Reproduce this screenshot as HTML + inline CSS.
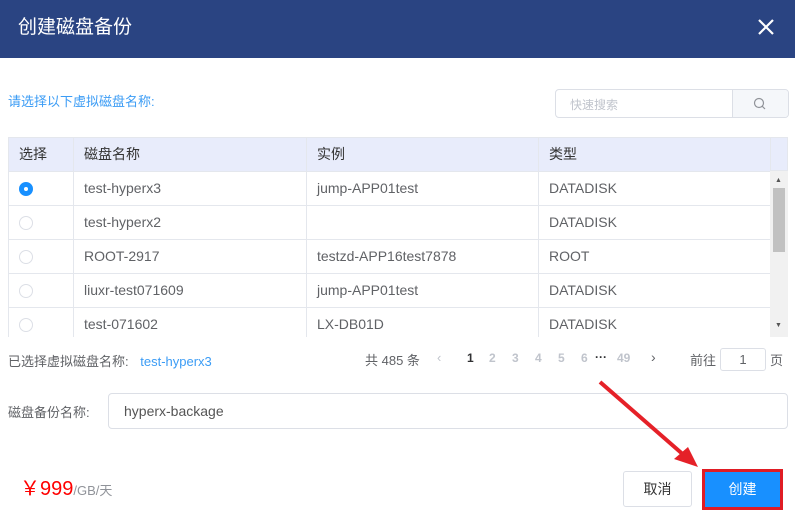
<!DOCTYPE html><html><head><meta charset="utf-8"><style>
*{margin:0;padding:0;box-sizing:border-box}
body{width:795px;height:526px;background:#fff;font-family:"Liberation Sans","Noto Sans CJK SC",sans-serif;font-size:14px;color:#606266;position:relative;overflow:hidden}
.hd{position:absolute;left:0;top:0;width:795px;height:58px;background:#2a4482;color:#fff;font-size:19px;line-height:56px;padding-left:18px}
.x{position:absolute;right:20px;top:18px;width:18px;height:18px}
.ab{position:absolute}
table{border-collapse:collapse;position:absolute;left:8px;top:137px;width:762px;table-layout:fixed}
td,th{border:1px solid #e4e7ed;height:34px;padding-left:10px;text-align:left;font-weight:normal;font-size:14px;white-space:nowrap;overflow:hidden;padding-bottom:2px}
th{background:#e8ecfb;color:#333}
.rb{width:14px;height:14px;border:1px solid #dcdfe6;border-radius:50%;display:inline-block;vertical-align:middle}
.on{background:#1890ff;border-color:#1890ff;position:relative}
.on:after{content:"";position:absolute;left:4px;top:4px;width:4px;height:4px;background:#fff;border-radius:50%}
</style></head><body>
<div class="hd">创建磁盘备份</div>
<svg class="x" viewBox="0 0 18 18"><path d="M2 2L16 16M16 2L2 16" stroke="#fff" stroke-width="2.2"/></svg>
<div class="ab" style="left:8px;top:91px;color:#3b9cf5;font-size:13px">请选择以下虚拟磁盘名称:</div>
<div class="ab" style="left:555px;top:89px;width:234px;height:29px;border:1px solid #dcdfe6;border-radius:4px;overflow:hidden">
<div class="ab" style="left:14px;top:6px;font-size:12px;color:#c0c4cc">快速搜索</div>
<div class="ab" style="left:176px;top:0;width:58px;height:27px;background:#f5f7fa;border-left:1px solid #dcdfe6"></div>
<svg class="ab" style="left:197px;top:7px" width="14" height="14" viewBox="0 0 14 14"><circle cx="6" cy="6" r="4.5" fill="none" stroke="#909399" stroke-width="1.2"/><path d="M9.3 9.3L12 12" stroke="#909399" stroke-width="1.2"/></svg>
</div>
<table>
<colgroup><col style="width:65px"><col style="width:233px"><col style="width:232px"><col style="width:232px"></colgroup>
<tr><th>选择</th><th>磁盘名称</th><th>实例</th><th>类型</th></tr>
<tr><td><span class="rb on"></span></td><td>test-hyperx3</td><td>jump-APP01test</td><td>DATADISK</td></tr>
<tr><td><span class="rb"></span></td><td>test-hyperx2</td><td></td><td>DATADISK</td></tr>
<tr><td><span class="rb"></span></td><td>ROOT-2917</td><td>testzd-APP16test7878</td><td>ROOT</td></tr>
<tr><td><span class="rb"></span></td><td>liuxr-test071609</td><td>jump-APP01test</td><td>DATADISK</td></tr>
<tr><td><span class="rb"></span></td><td>test-071602</td><td>LX-DB01D</td><td>DATADISK</td></tr>
</table>
<div class="ab" style="left:770px;top:137px;width:18px;height:34px;background:#e8ecfb;border:1px solid #e4e7ed"></div>
<div class="ab" style="left:770px;top:171px;width:18px;height:166px;background:#f1f1f1"></div>
<div class="ab" style="left:773px;top:188px;width:12px;height:64px;background:#c1c1c1"></div>
<div class="ab" style="left:775px;top:177px;font-size:7px;color:#555">▲</div>
<div class="ab" style="left:775px;top:322px;font-size:7px;color:#555">▼</div>
<div class="ab" style="left:0;top:337px;width:795px;height:5px;background:#fff"></div>
<div class="ab" style="left:8px;top:351px;font-size:13px">已选择虚拟磁盘名称: <span style="color:#3b9cf5;margin-left:8px">test-hyperx3</span></div>
<div class="ab" style="left:365px;top:350px;font-size:13px">共 485 条</div>
<div class="ab" style="left:437px;top:350px;font-size:13px;color:#c0c4cc">‹</div>
<div class="ab" style="left:467px;top:351px;font-size:12px;color:#303133;font-weight:bold">1</div>
<div class="ab" style="left:489px;top:351px;font-size:12px;color:#c0c4cc;font-weight:bold;word-spacing:13px">2 3 4 5 6</div>
<div class="ab" style="left:595px;top:350px;font-size:12px;color:#303133;font-weight:bold">···</div>
<div class="ab" style="left:617px;top:351px;font-size:12px;color:#c0c4cc;font-weight:bold">49</div>
<div class="ab" style="left:651px;top:349px;font-size:14px;color:#606266">›</div>
<div class="ab" style="left:690px;top:350px;font-size:13px">前往</div>
<div class="ab" style="left:720px;top:348px;width:46px;height:23px;border:1px solid #dcdfe6;border-radius:3px;text-align:center;line-height:21px;font-size:13px">1</div>
<div class="ab" style="left:770px;top:350px;font-size:13px">页</div>
<div class="ab" style="left:8px;top:402px;font-size:13px">磁盘备份名称:</div>
<div class="ab" style="left:108px;top:393px;width:680px;height:36px;border:1px solid #dcdfe6;border-radius:4px;padding-left:15px;line-height:34px;font-size:14px;color:#555">hyperx-backage</div>
<div class="ab" style="left:20px;top:472px;color:#f00;font-size:20px">￥999<span style="font-size:13px;color:#909399">/GB/天</span></div>
<div class="ab" style="left:623px;top:471px;width:69px;height:36px;border:1px solid #dcdfe6;border-radius:3px;text-align:center;line-height:34px;color:#333">取消</div>
<div class="ab" style="left:703px;top:470px;width:79px;height:39px;border:2px solid #e01c24;background:#1890ff;outline:1px solid #e01c24"></div>
<div class="ab" style="left:707px;top:474px;width:71px;height:31px;background:#1890ff;color:#fff;text-align:center;line-height:31px">创建</div>
<svg class="ab" style="left:590px;top:375px" width="115" height="100" viewBox="0 0 115 100"><path d="M10 7L96 82" stroke="#e52128" stroke-width="4"/><path d="M108 92L84 84L98 72Z" fill="#e52128"/></svg>
</body></html>
